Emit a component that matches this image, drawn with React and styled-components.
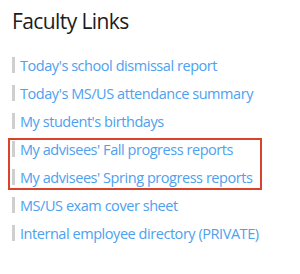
import styled, { createGlobalStyle } from "styled-components";

const GlobalStyle = createGlobalStyle`
  html, body {
    margin: 0;
    padding: 0;
    background: #ffffff;
  }
  body {
    font-family: "Open Sans", "Noto Sans", sans-serif;
  }
`;

const links = [
  { label: "Today's school dismissal report" },
  { label: "Today's MS/US attendance summary" },
  { label: "My student's birthdays" },
  { label: "My advisees' Fall progress reports", highlight: true },
  { label: "My advisees' Spring progress reports", highlight: true },
  { label: "MS/US exam cover sheet" },
  { label: "Internal employee directory (PRIVATE)" },
];

export default function App() {
  const before = links.slice(0, 3);
  const marked = links.filter((l) => l.highlight);
  const after = links.slice(5);

  return (
    <>
      <GlobalStyle />
      <Panel>
        <Title>Faculty Links</Title>
        <LinkList>
          {before.map((l) => (
            <LinkRow key={l.label}>
              <LinkText href="#">{l.label}</LinkText>
            </LinkRow>
          ))}
          <Highlight>
            {marked.map((l) => (
              <LinkRow key={l.label}>
                <LinkText href="#">{l.label}</LinkText>
              </LinkRow>
            ))}
          </Highlight>
          {after.map((l) => (
            <LinkRow key={l.label}>
              <LinkText href="#">{l.label}</LinkText>
            </LinkRow>
          ))}
        </LinkList>
      </Panel>
    </>
  );
}

const Panel = styled.div`
  width: 300px;
  height: 274px;
  padding: 8px 0 0 12px;
  box-sizing: border-box;
`;

const Title = styled.h2`
  margin: 0;
  font-size: 21px;
  font-weight: 400;
  color: #1c1c1c;
  line-height: 26px;
  letter-spacing: -0.6px;
`;

const LinkList = styled.div`
  margin-top: 17px;
  display: flex;
  flex-direction: column;
`;

const LinkRow = styled.div`
  display: flex;
  align-items: center;
  height: 28px;

  &::before {
    content: "";
    flex: none;
    width: 3px;
    height: 16px;
    margin-right: 5px;
    background: #cfcfcf;
  }
`;

const LinkText = styled.a`
  font-size: 14.5px;
  color: #4da1ef;
  text-decoration: none;
  white-space: nowrap;
  letter-spacing: -0.45px;
`;

const Highlight = styled.div`
  width: 254px;
  margin: 3px 0 1px -4px;
  padding-left: 2px;
  border: 2px solid #d9432c;
  box-sizing: border-box;

  & > div:first-child {
    margin-top: -5px;
  }
  & > div:last-child {
    margin-bottom: -3px;
  }
`;
